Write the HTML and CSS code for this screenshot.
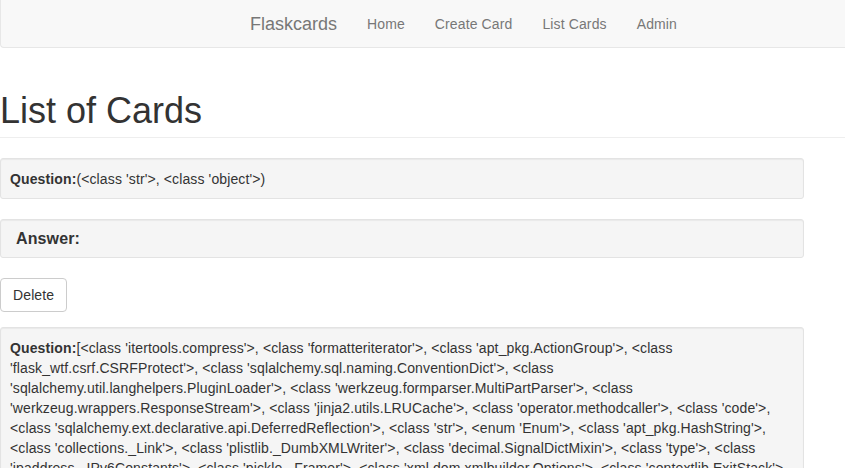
FILE: index.html
```html
<!DOCTYPE html>
<html>
<head>
<meta charset="utf-8">
<title>Flaskcards</title>
<link rel="stylesheet" href="styles.css">
</head>
<body>
<nav class="navbar">
  <div class="nav-inner">
    <a class="brand" href="#">Flaskcards</a>
    <ul class="nav-links">
      <li><a href="#">Home</a></li>
      <li><a href="#">Create Card</a></li>
      <li><a href="#">List Cards</a></li>
      <li><a href="#">Admin</a></li>
    </ul>
  </div>
</nav>
<main class="content">
  <div class="page-header"><h1>List of Cards</h1></div>

  <div class="well question"><b>Question:</b>(&lt;class 'str'&gt;, &lt;class 'object'&gt;)</div>
  <div class="well answer"><b>Answer:</b></div>
  <button class="btn">Delete</button>

  <div class="well question"><b>Question:</b>[&lt;class 'itertools.compress'&gt;, &lt;class 'formatteriterator'&gt;, &lt;class 'apt_pkg.ActionGroup'&gt;, &lt;class 'flask_wtf.csrf.CSRFProtect'&gt;, &lt;class 'sqlalchemy.sql.naming.ConventionDict'&gt;, &lt;class 'sqlalchemy.util.langhelpers.PluginLoader'&gt;, &lt;class 'werkzeug.formparser.MultiPartParser'&gt;, &lt;class 'werkzeug.wrappers.ResponseStream'&gt;, &lt;class 'jinja2.utils.LRUCache'&gt;, &lt;class 'operator.methodcaller'&gt;, &lt;class 'code'&gt;, &lt;class 'sqlalchemy.ext.declarative.api.DeferredReflection'&gt;, &lt;class 'str'&gt;, &lt;enum 'Enum'&gt;, &lt;class 'apt_pkg.HashString'&gt;, &lt;class 'collections._Link'&gt;, &lt;class 'plistlib._DumbXMLWriter'&gt;, &lt;class 'decimal.SignalDictMixin'&gt;, &lt;class 'type'&gt;, &lt;class 'ipaddress._IPv6Constants'&gt;, &lt;class 'pickle._Framer'&gt;, &lt;class 'xml.dom.xmlbuilder.Options'&gt;, &lt;class 'contextlib.ExitStack'&gt;, &lt;class 'email.charset.Charset'&gt;, &lt;class 'json.encoder.JSONEncoder'&gt;, &lt;class 'threading.Thread'&gt;, &lt;class 'socket.socket'&gt;, &lt;class 'logging.Handler'&gt;]</div>
</main>
</body>
</html>
```

FILE: styles.css
```css
html, body {
  margin: 0;
  padding: 0;
  background: #fff;
}
body {
  font-family: "Liberation Sans", Arial, Helvetica, sans-serif;
  font-size: 14px;
  line-height: 20px;
  color: #333;
  letter-spacing: 0.12px;
}
.navbar {
  height: 47px;
  background: #f8f8f8;
  border-left: 1px solid #e7e7e7;
  border-bottom: 1px solid #e7e7e7;
  border-bottom-left-radius: 4px;
}
.nav-inner {
  display: flex;
  align-items: center;
  height: 100%;
  padding-left: 234px;
}
.navbar a {
  text-decoration: none;
  color: #777;
}
.brand {
  font-size: 18px;
  line-height: 20px;
  padding: 0 15px;
  letter-spacing: 0;
}
.nav-links {
  display: flex;
  list-style: none;
  margin: 0;
  padding: 0;
}
.nav-links a {
  display: block;
  padding: 0 15px;
  font-size: 14px;
  line-height: 20px;
}
.content {
  width: 804px;
  padding-top: 43px;
}
.page-header {
  padding-bottom: 6px;
  border-bottom: 1px solid #eee;
  margin-bottom: 20px;
  width: 845px;
}
.page-header h1 {
  margin: 0;
  font-size: 36px;
  font-weight: 500;
  line-height: 39.6px;
  color: #333;
  letter-spacing: 0;
}
.well {
  background: #f5f5f5;
  border: 1px solid #e3e3e3;
  border-radius: 3px;
  box-shadow: inset 0 1px 1px rgba(0, 0, 0, 0.05);
  margin-bottom: 20px;
}
.question {
  padding: 10px 9px 9px;
}
.answer {
  padding: 9px 15px 8px;
  font-size: 16px;
}
.btn {
  display: block;
  font-family: inherit;
  font-size: 14px;
  line-height: 20px;
  letter-spacing: inherit;
  padding: 6px 12px;
  color: #333;
  background: #fff;
  border: 1px solid #ccc;
  border-radius: 4px;
  margin: 0 0 15px;
  height: 34px;
}
```
